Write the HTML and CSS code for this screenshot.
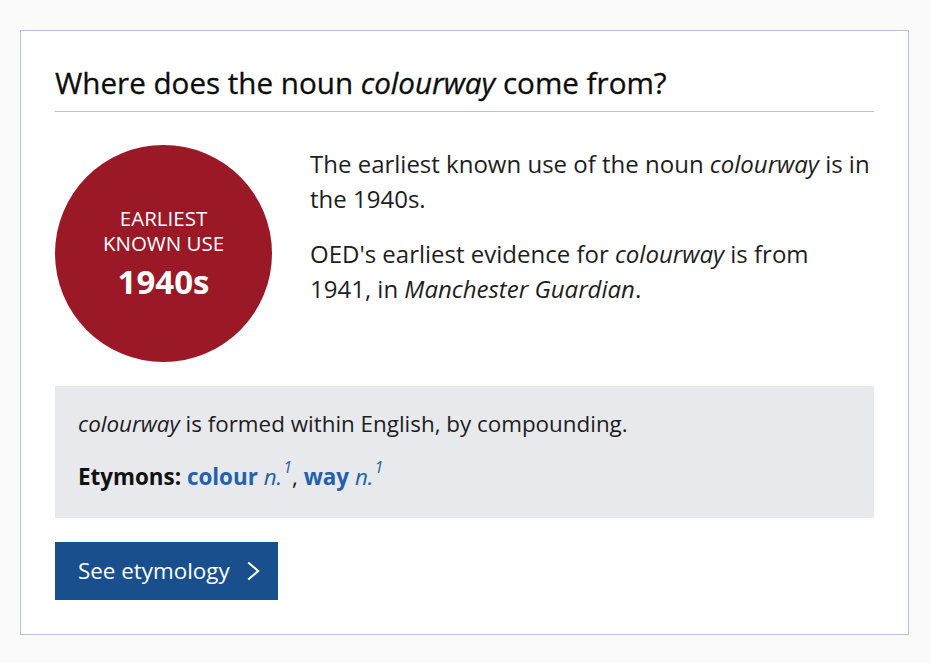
FILE: index.html
```html
<!DOCTYPE html>
<html lang="en">
<head>
<meta charset="utf-8">
<title>Where does the noun colourway come from?</title>
<link rel="stylesheet" href="styles.css">
</head>
<body>
<section class="card">
  <h2 class="title">Where does the noun <em>colourway</em> come from?</h2>
  <div class="row">
    <div class="circle">
      <span class="circle-label">Earliest<br>known use</span>
      <span class="circle-date">1940s</span>
    </div>
    <div class="text">
      <p>The earliest known use of the noun <em>colourway</em> is in the 1940s.</p>
      <p>OED's earliest evidence for <em>colourway</em> is from 1941, in <em>Manchester Guardian</em>.</p>
    </div>
  </div>
  <div class="etym">
    <p><em>colourway</em> is formed within English, by compounding.</p>
    <p><strong>Etymons:</strong> <a class="link" href="#"><b>colour</b> <i>n.</i><sup>1</sup></a>, <a class="link" href="#"><b>way</b> <i>n.</i><sup>1</sup></a></p>
  </div>
  <a class="btn" href="#">See etymology
    <svg class="chev" width="13" height="20" viewBox="0 0 13 20" aria-hidden="true"><path d="M1.2 1.5 L11.2 10 L1.2 18.5" fill="none" stroke="#fff" stroke-width="2"/></svg>
  </a>
</section>
</body>
</html>
```
FILE: styles.css
```css
html, body {
  margin: 0;
  padding: 0;
}
body {
  background: #fafafa;
  font-family: "Open Sans", "Noto Sans", sans-serif;
  color: #1a1a1a;
  padding: 30px 21px 0 20px;
}
.card {
  background: #fff;
  border: 1px solid #b3c1d9;
  padding: 33px 34px 34px 34px;
}
.title {
  margin: 0;
  font-size: 29.6px;
  line-height: 38px;
  font-weight: 400;
  color: #0d0d0d;
  padding-bottom: 9px;
  border-bottom: 1px solid #b9c2d0;
  -webkit-text-stroke: 0.3px #0d0d0d;
}
.title em {
  font-style: italic;
}
.row {
  display: flex;
  gap: 38px;
  margin-top: 33px;
}
.circle {
  flex: 0 0 217px;
  width: 217px;
  height: 217px;
  border-radius: 50%;
  background: #9b1927;
  color: #fff;
  display: flex;
  flex-direction: column;
  align-items: center;
  justify-content: center;
  text-align: center;
}
.circle-label {
  text-transform: uppercase;
  font-size: 20.5px;
  line-height: 25px;
}
.circle-date {
  font-size: 33px;
  line-height: 40px;
  font-weight: 700;
  margin-top: 6px;
}
.text {
  padding-top: 1px;
}
.text p {
  margin: 0 0 20px 0;
  font-size: 24px;
  line-height: 35px;
  color: #1e1e1e;
}
.text p:last-child {
  margin-bottom: 0;
}
.etym {
  margin-top: 24px;
  background: #e8e9ed;
  padding: 21px 23px 25px 23px;
}
.etym p {
  margin: 0;
  font-size: 22.4px;
  line-height: 33px;
  color: #1e1e1e;
}
.etym p + p {
  margin-top: 20px;
}
.etym strong {
  font-weight: 700;
  color: #111;
}
.link {
  color: #2262ab;
  text-decoration: none;
}
.link b {
  font-weight: 700;
}
.link i {
  font-style: italic;
}
.link sup {
  font-style: italic;
  font-size: 16px;
  line-height: 0;
  vertical-align: 12px;
  margin-left: 1px;
}
.btn {
  display: inline-flex;
  align-items: center;
  gap: 17px;
  margin-top: 24px;
  height: 58px;
  padding: 0 18px 0 23px;
  background: #194f8d;
  color: #fff;
  text-decoration: none;
  font-size: 22.4px;
  line-height: 30px;
}
.chev {
  display: block;
}
```
